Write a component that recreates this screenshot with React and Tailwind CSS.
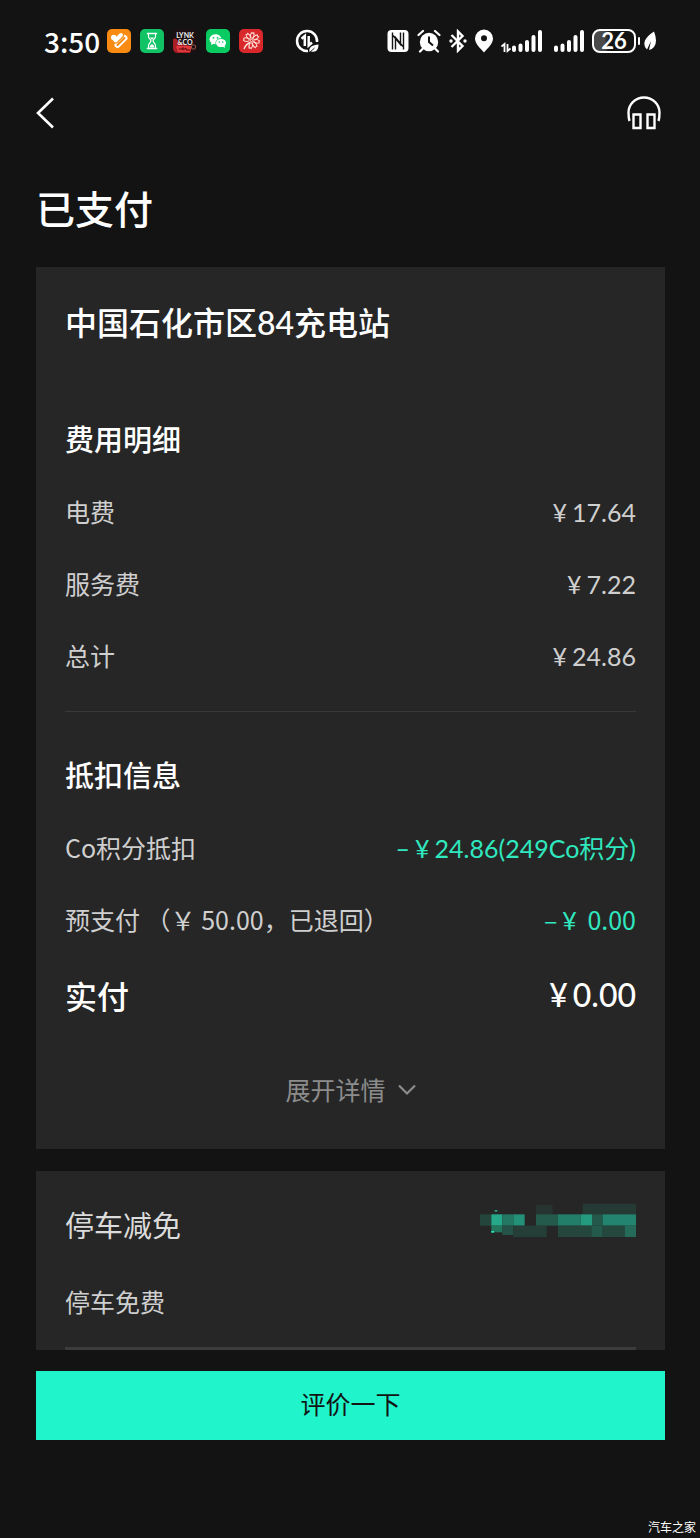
import React from 'react';

const FEES = [
  { label: '电费', value: '17.64' },
  { label: '服务费', value: '7.22' },
  { label: '总计', value: '24.86' },
];

const APP_ICONS = [FitnessIcon, HourglassIcon, LynkIcon, WechatIcon, FlowerIcon];

function FitnessIcon() {
  return (
    <svg viewBox="0 0 24 24" className="h-6 w-6" fill="none" strokeLinecap="round" strokeLinejoin="round" aria-hidden="true">
      <rect width="24" height="24" rx="5" fill="#f98b12" />
      <path d="m10.500 16 7-7" stroke="#fff" strokeWidth="6" />
      <path d="m10.500 16 7-7" stroke="#f98b12" strokeWidth="2" />
      <path d="M6.500 8.500 9 11.500l5-5" stroke="#f98b12" strokeWidth="6" />
      <path d="M6.500 8.200 8.500 11.500l5.500-5.500" stroke="#fff" strokeWidth="4" />
      <circle cx="6.800" cy="8.500" r="2.800" fill="#fff" />
    </svg>
  );
}

function HourglassIcon() {
  return (
    <svg viewBox="0 0 24 24" className="h-6 w-6" aria-hidden="true">
      <rect width="24" height="24" rx="5" fill="#10c465" />
      <g stroke="#fff" strokeWidth="1.200" fill="none" strokeLinecap="round">
        <path d="M7.500 4.500h9M7.500 19.500h9" strokeWidth="1.600" />
        <path d="M8.500 5v2.500c0 2 2.500 3 2.500 4.500s-2.500 2.500-2.500 4.500V19M15.500 5v2.500c0 2-2.500 3-2.500 4.500s2.500 2.500 2.500 4.500V19" />
      </g>
      <path d="M10 8.500h4L12 11zM9.500 18.500q.5-3 2.500-3.500 2 .5 2.500 3.500z" fill="#fff" />
    </svg>
  );
}

function LynkIcon() {
  return (
    <svg viewBox="0 0 24 24" className="h-6 w-6" aria-hidden="true">
      <rect width="24" height="24" rx="5" fill="#1c1012" />
      <path d="M0 10q4-2 6 4l13 3-2 7H5q-5 0-5-5z" fill="#a81f26" />
      <path d="M3 17h16l-2 6H5z" fill="#e23a3c" />
      <text x="12" y="9" textAnchor="middle" fontSize="7" fontWeight="700" fontFamily="Lato, sans-serif" fill="#eee">LYNK</text>
      <text x="12" y="15.500" textAnchor="middle" fontSize="7" fontWeight="700" fontFamily="Lato, sans-serif" fill="#eee">&amp;CO</text>
      <path d="M6 20h3l1-1.500V21l3-2v2h4" stroke="#56090d" fill="none" />
      <circle cx="20.500" cy="18" r="2.200" stroke="#b56a55" strokeWidth=".8" fill="#1c1012" />
    </svg>
  );
}

function WechatIcon() {
  return (
    <svg viewBox="0 0 24 24" className="h-6 w-6" aria-hidden="true">
      <rect width="24" height="24" rx="5" fill="#0acb62" />
      <ellipse cx="9.500" cy="10.200" rx="6" ry="5" fill="#fff" />
      <path d="m5.500 13-.5 3 3.500-1.500z" fill="#fff" />
      <ellipse cx="15" cy="14" rx="5.600" ry="4.700" fill="#0acb62" />
      <ellipse cx="15" cy="14" rx="5" ry="4.100" fill="#fff" />
      <path d="m18.500 16 .6 2.800-3-1.300z" fill="#fff" />
      <g fill="#0acb62">
        <circle cx="7.500" cy="8.800" r=".9" />
        <circle cx="11.500" cy="8.800" r=".9" />
        <circle cx="13.300" cy="13" r=".8" />
        <circle cx="16.700" cy="13" r=".8" />
      </g>
    </svg>
  );
}

function FlowerIcon() {
  return (
    <svg viewBox="0 0 24 24" className="h-6 w-6" aria-hidden="true">
      <rect width="24" height="24" rx="5" fill="#d9282c" />
      <g stroke="#ffe3d8" strokeWidth="1" fill="none">
        {[10, 55, 100, 145, 190, 280, 325].map((deg) => (
          <path key={deg} transform={`rotate(${deg} 12.500 11.500)`} d="M12 9.500Q9.500 6.500 11.500 3.500q1 1 2 0 1.500 3-.5 6" />
        ))}
        <circle cx="12.500" cy="11.500" r="1.200" />
        <path d="M11 13.500q-4 1.500-6 6.500" strokeWidth="1.400" />
      </g>
    </svg>
  );
}

function DataSaverIcon() {
  return (
    <svg viewBox="0 0 24 24" className="h-6 w-6" fill="none" aria-hidden="true">
      <path d="M22 13A10 10 0 1 0 13 22" stroke="#fff" strokeWidth="2.500" />
      <path d="M6.500 9.800 9.800 7v10M13.700 7v9.500l3.300-3" stroke="#fff" strokeWidth="2.500" />
      <path d="M14.500 23c-1-5 3-7 9-7.500 0 5.500-2.500 8-7 7z" fill="#fff" />
      <path d="m14 24 5.500-5" stroke="#131313" strokeWidth=".9" />
    </svg>
  );
}

function NfcIcon() {
  return (
    <svg viewBox="0 0 22 22" className="h-[22px] w-[22px]" fill="none" aria-hidden="true">
      <rect x=".5" width="21" height="22" rx="4" fill="#fff" />
      <path d="M5.500 2.500v17M16.500 19.500v-17M8.500 19.500V7.500l7.500 9M13.500 2.500v12L6 5.500" stroke="#131313" strokeWidth="1.400" />
    </svg>
  );
}

function AlarmIcon() {
  return (
    <svg viewBox="0 0 24 24" className="h-6 w-6" fill="none" aria-hidden="true">
      <circle cx="12" cy="13" r="9.200" fill="#fff" />
      <path d="M1.500 6 6 2M22.500 6 18 2M6 19.500l-3 3M18 19.500l3 3" stroke="#fff" strokeWidth="2.200" strokeLinecap="round" />
      <path d="M12 7.500V13l4 3.500" stroke="#131313" strokeWidth="2" />
    </svg>
  );
}

function BluetoothIcon() {
  return (
    <svg viewBox="0 0 18 24" className="h-6 w-[18px]" fill="none" aria-hidden="true">
      <path d="m2.500 6 11 11L9 21.500v-19L13.500 7l-11 11" stroke="#fff" strokeWidth="2.400" />
      <circle cx="2" cy="12" r="1.700" fill="#fff" />
      <circle cx="16" cy="12" r="1.700" fill="#fff" />
    </svg>
  );
}

function PinIcon() {
  return (
    <svg viewBox="0 0 18 24" className="h-6 w-[18px]" aria-hidden="true">
      <path fillRule="evenodd" d="M9 0.500a9 9 0 0 1 9 9c0 5-5 9.500-9 14-4-4.500-9-9-9-14a9 9 0 0 1 9-9zm0 5.700a3 3 0 1 0 0 6 3 3 0 0 0 0-6z" fill="#fff" />
    </svg>
  );
}

function SignalIcon() {
  return (
    <svg viewBox="0 0 30 24" className="h-6 w-[30px]" stroke="#fff" strokeWidth="4" strokeLinecap="round" aria-hidden="true">
      <path d="M2 18.500v2.500M8.500 16.500v4.500M15 13v8M21.500 8v13M28 3v18" />
    </svg>
  );
}

function DataArrowsIcon() {
  return (
    <svg viewBox="0 0 10 24" className="h-6 w-[10px]" fill="none" stroke="#fff" strokeWidth="1.800" aria-hidden="true">
      <path d="m.5 17.500 3-2.500v8M6.500 15v7l3-2.500" />
    </svg>
  );
}

function LeafIcon() {
  return (
    <svg viewBox="0 0 12 20" className="h-5 w-3" aria-hidden="true">
      <path d="M10 .5q4 10 0 15.500-2 2.500-5 3L7 10l-4 8.500Q-1 15 1 9.500 3 5 10 .5z" fill="#fff" />
    </svg>
  );
}

const LATO = "font-[family-name:'Lato','Noto_Sans_CJK_SC',sans-serif]";

function StatusBar() {
  return (
    <div className="flex h-[82px] items-center justify-between px-11 text-white">
      <div className="flex items-center">
        <span className="w-[63px] text-[28px] font-medium leading-none">3:50</span>
        <div className="flex items-center gap-[9px]">
          {APP_ICONS.map((Icon, idx) => (
            <Icon key={idx} />
          ))}
        </div>
        <div className="ml-8">
          <DataSaverIcon />
        </div>
      </div>

      <div className="flex items-center">
        <div className="flex items-center gap-2">
          <NfcIcon />
          <AlarmIcon />
          <BluetoothIcon />
          <PinIcon />
        </div>
        <div className="ml-2 flex items-center gap-3">
          <div className="flex items-center gap-px">
            <DataArrowsIcon />
            <SignalIcon />
          </div>
          <SignalIcon />
        </div>
        <div className="ml-2 flex items-center">
          <span className={`flex h-6 w-11 items-center justify-center rounded-lg border-2 border-white bg-linear-to-r from-[#4a4a4a] from-26% to-[#131313] to-40% text-[22px] font-bold leading-none ${LATO}`}>
            26
          </span>
          <span className="ml-0.5 h-2 w-0.5 rounded-full bg-white" />
          <span className="ml-1">
            <LeafIcon />
          </span>
        </div>
      </div>
    </div>
  );
}

function Yen() {
  return <span className={`mx-[5px] ${LATO}`}>¥</span>;
}

function Row({ label, accent, children }) {
  return (
    <div className="flex h-[72px] items-center justify-between text-[25px]">
      <dt className="text-[#cfcfcf]">{label}</dt>
      <dd className={accent ? 'text-[#2fe8bf]' : 'text-[#cfcfcf]'}>{children}</dd>
    </div>
  );
}

// Pixelated discount text: [x, y, width, height, colour]
const MOSAIC = [
  [180, 5, 50, 30, '#263330'],
  [320, 2, 160, 32, '#253a34'],
  [12, 34, 34, 34, '#24453c'],
  [46, 34, 33, 34, '#25a98a'],
  [79, 34, 33, 34, '#237864'],
  [112, 34, 34, 34, '#239078'],
  [180, 34, 66, 34, '#245a4b'],
  [246, 34, 68, 34, '#237e69'],
  [314, 34, 34, 34, '#249a7f'],
  [348, 34, 32, 34, '#24584a'],
  [380, 34, 100, 34, '#238570'],
  [46, 68, 33, 20, '#24775f'],
  [79, 68, 33, 28, '#255347'],
  [112, 68, 100, 34, '#253f38'],
  [246, 68, 100, 34, '#24463c'],
  [346, 68, 34, 34, '#245a4b'],
  [380, 68, 66, 34, '#24483e'],
  [446, 68, 34, 34, '#246b59'],
  [46, 84, 8, 5, '#2fe8bf'],
  [56, 21, 8, 5, '#28a488'],
];

export default function App() {
  return (
    <div className="relative flex min-h-screen flex-col bg-[#131313] font-[family-name:'Noto_Sans_CJK_SC',sans-serif]">
      <StatusBar />

      {/* Nav */}
      <nav className="flex h-[62px] items-center justify-between pl-9 pr-[39px]">
        <button type="button" aria-label="返回" className="cursor-pointer">
          <svg viewBox="0 0 20 32" className="h-8 w-5" fill="none" stroke="#fff" strokeWidth="2.600" aria-hidden="true">
            <path d="M17 1.500 2 16l15 14.500" />
          </svg>
        </button>
        <button type="button" aria-label="客服" className="cursor-pointer">
          <svg viewBox="0 0 34 34" className="h-[34px] w-[34px]" fill="none" stroke="#fff" strokeWidth="2.400" aria-hidden="true">
            <path d="M2.500 25Q1.500 22 1.500 16.500a15.500 15 0 0 1 31 0q0 5.500-1 8.500" />
            <path d="M6.500 18.500h7V32h-7zM20.500 18.500h7V32h-7z" />
          </svg>
        </button>
      </nav>

      <h1 className="mt-[39px] px-9 text-[39px] font-medium leading-[48px] text-white">已支付</h1>

      <main className="mt-9 pl-9 pr-[35px]">
        {/* Bill */}
        <section className="bg-[#262626] px-[29px] pb-[39px] pt-9">
          <h2 className={`text-[32px] font-medium leading-[40px] text-white ${LATO}`}>中国石化市区84充电站</h2>

          <h3 className="mt-[75px] text-[29px] font-medium leading-[40px] text-white">费用明细</h3>
          <dl className={`mt-[19px] ${LATO}`}>
            {FEES.map((fee) => (
              <Row key={fee.label} label={fee.label}>
                <Yen />
                {fee.value}
              </Row>
            ))}
          </dl>

          <hr className="mt-[18px] border-[#393939]" />

          <h3 className="mt-[42px] text-[29px] font-medium leading-[40px] text-white">抵扣信息</h3>
          <dl className="mt-[18px]">
            <Row label="Co积分抵扣" accent>
              <span className={LATO}>
                –<Yen />
                24.86(249Co积分)
              </span>
            </Row>
            <Row label="预支付 （￥ 50.00，已退回）" accent>
              –<Yen /> 0.00
            </Row>
            <div className="flex h-[78px] items-center justify-between text-[32px] font-medium text-white">
              <dt>实付</dt>
              <dd className={LATO}>
                <Yen />
                0.00
              </dd>
            </div>
          </dl>

          <button type="button" className="mx-auto mt-9 flex h-10 cursor-pointer items-center gap-3 text-[25px] text-[#8c8c8c]">
            展开详情
            <svg viewBox="0 0 18 12" className="h-3 w-[18px]" fill="none" stroke="currentColor" strokeWidth="2.200" aria-hidden="true">
              <path d="m1 1.500 8 8 8-8" />
            </svg>
          </button>
        </section>

        {/* Parking */}
        <section className="mt-[22px] bg-[#262626] px-[29px] pt-8">
          <div className="flex items-start justify-between">
            <h3 className="text-[29px] leading-[42px] text-[#dcdcdc]">停车减免</h3>
            <svg viewBox="0 0 480 102" className="h-[34px] w-40" aria-hidden="true">
              {MOSAIC.map(([x, y, w, h, fill], idx) => (
                <rect key={idx} x={x} y={y} width={w} height={h} fill={fill} />
              ))}
            </svg>
          </div>
          <p className="mt-5 text-[25px] leading-[72px] text-[#cfcfcf]">停车免费</p>
          <div className="mt-[10px] h-[3px] bg-[#3c3c3c]" />
        </section>

        <button type="button" className="mt-[21px] h-[69px] w-full cursor-pointer bg-[#20f4cb] pb-1 text-[25px] text-[#131313]">
          评价一下
        </button>
      </main>

      <span className="absolute bottom-0.5 right-1 text-[12px] leading-[18px] text-white">汽车之家</span>
    </div>
  );
}
